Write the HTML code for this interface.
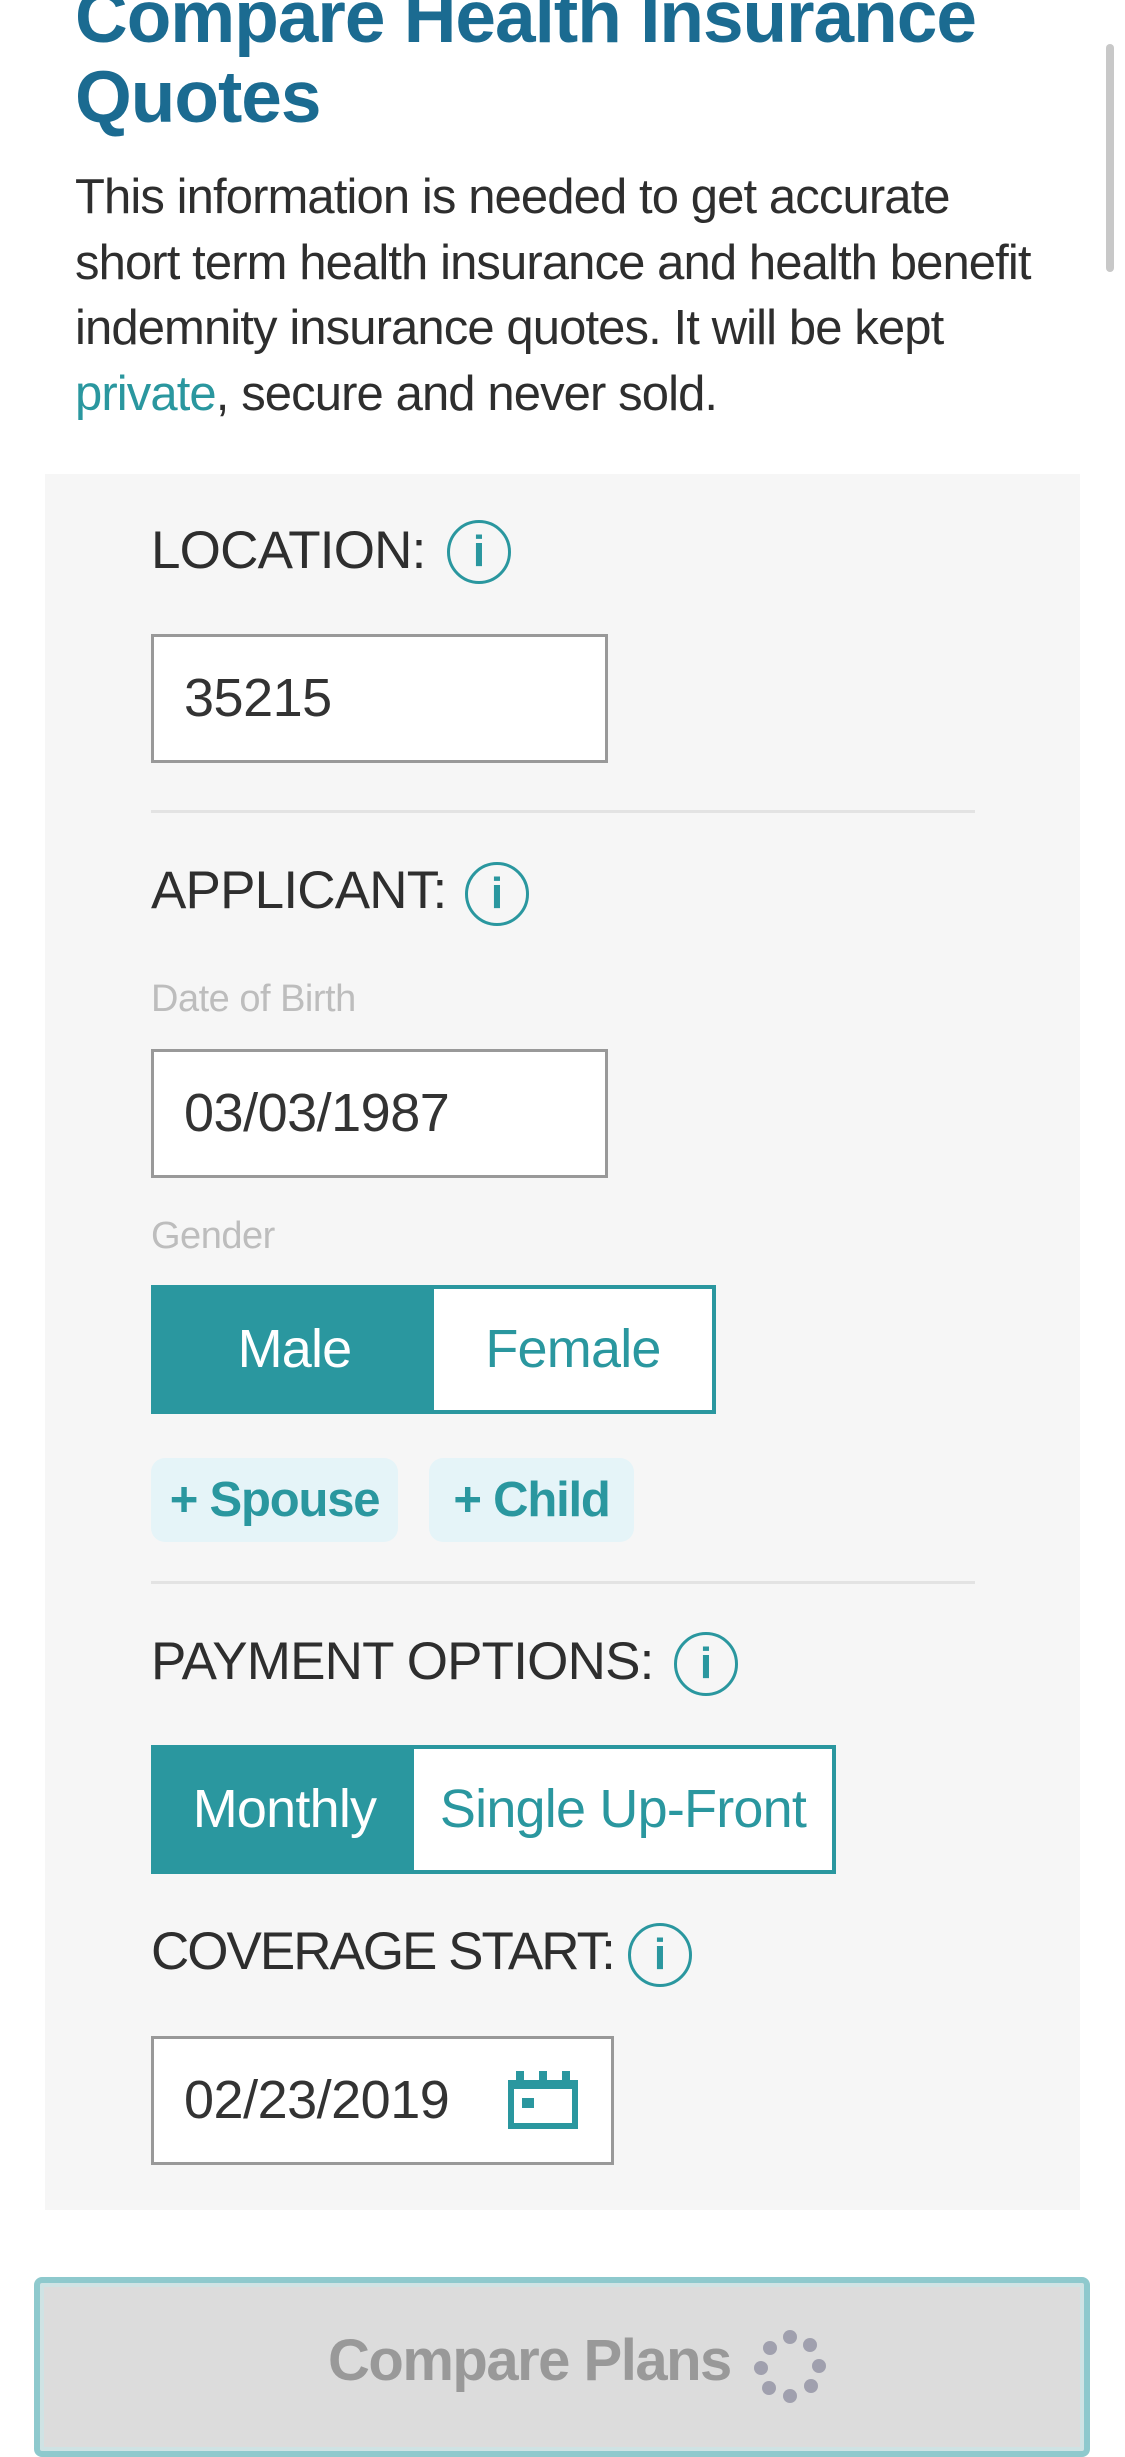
<!DOCTYPE html>
<html><head><meta charset="utf-8"><style>
*{margin:0;padding:0;box-sizing:border-box}
body{width:1125px;height:2436px;overflow:hidden;background:#fff;font-family:"Liberation Sans",sans-serif;position:relative;color:#333}
.a{position:absolute;white-space:nowrap}
h1{position:absolute;left:75px;top:-22px;font-size:73px;line-height:80px;color:#1b6b91;font-weight:bold;letter-spacing:-1px}
.p{position:absolute;left:75px;top:165px;font-size:49px;line-height:65.5px;letter-spacing:-0.9px;color:#2e2e2e}
.p span{color:#2a979f}
.panel{position:absolute;left:45px;top:474px;width:1035px;height:1736px;background:#f6f6f6}
.lbl{font-size:53px;letter-spacing:-0.8px;color:#2e2e2e}
.info{position:absolute;width:64px;height:64px;border:3px solid #2a979f;border-radius:50%;color:#2a979f;font-size:44px;text-align:center;line-height:58px;font-weight:bold}
.inp{position:absolute;left:151px;width:457px;height:129px;background:#fff;border:3px solid #999;font-size:54px;line-height:123px;padding-left:30px;color:#333;letter-spacing:-0.5px}
.hr{position:absolute;left:151px;width:824px;height:3px;background:#e3e3e3}
.small{font-size:38px;color:#bdbdbd;letter-spacing:-0.5px}
.tog{position:absolute;left:151px;height:129px;border:4px solid #2a979f;background:#fff;display:flex}
.tog div{height:100%;font-size:54px;line-height:121px;text-align:center;color:#2a979f;letter-spacing:-0.8px}
.tog .on{background:#2a979f;color:#fff}
.pill{position:absolute;top:1458px;height:84px;background:#e5f4f8;border-radius:14px;color:#2a979f;font-size:49px;font-weight:bold;line-height:84px;text-align:center;letter-spacing:-1.2px}
</style></head><body>
<h1>Compare Health Insurance<br>Quotes</h1>
<div class="p">This information is needed to get accurate<br>short term health insurance and health benefit<br>indemnity insurance quotes. It will be kept<br><span>private</span>, secure and never sold.</div>
<div class="a" style="left:1106px;top:44px;width:8px;height:228px;background:#c8c8c8;border-radius:4px"></div>
<div class="panel"></div>
<div class="a lbl" style="left:151px;top:520px">LOCATION:</div>
<div class="info" style="left:447px;top:520px">i</div>
<div class="inp" style="top:634px">35215</div>
<div class="hr" style="top:810px"></div>
<div class="a lbl" style="left:151px;top:860px">APPLICANT:</div>
<div class="info" style="left:465px;top:862px">i</div>
<div class="a small" style="left:151px;top:978px">Date of Birth</div>
<div class="inp" style="top:1049px">03/03/1987</div>
<div class="a small" style="left:151px;top:1215px">Gender</div>
<div class="tog" style="top:1285px;width:565px"><div class="on" style="width:279px">Male</div><div style="flex:1">Female</div></div>
<div class="pill" style="left:151px;width:247px">+ Spouse</div>
<div class="pill" style="left:429px;width:205px">+ Child</div>
<div class="hr" style="top:1581px"></div>
<div class="a lbl" style="left:151px;top:1631px">PAYMENT OPTIONS:</div>
<div class="info" style="left:674px;top:1632px">i</div>
<div class="tog" style="top:1745px;width:685px"><div class="on" style="width:259px">Monthly</div><div style="flex:1">Single Up-Front</div></div>
<div class="a lbl" style="left:151px;top:1921px;letter-spacing:-2px">COVERAGE START:</div>
<div class="info" style="left:628px;top:1923px">i</div>
<div class="inp" style="top:2036px;width:463px">02/23/2019</div>
<svg class="a" style="left:508px;top:2069px" width="70" height="60" viewBox="0 0 70 60"><rect x="3" y="14" width="64" height="43" fill="none" stroke="#2a979f" stroke-width="6"/><rect x="3" y="12" width="64" height="8" fill="#2a979f"/><rect x="8" y="2" width="8" height="12" fill="#2a979f"/><rect x="31" y="2" width="8" height="12" fill="#2a979f"/><rect x="54" y="2" width="8" height="12" fill="#2a979f"/><rect x="14" y="29" width="12" height="10" fill="#2a979f"/></svg>
<div class="a" style="left:34px;top:2277px;width:1056px;height:180px;border:6px solid #8ec9cd;border-radius:8px;background:#dcdcdc;box-shadow:inset 0 0 0 4px #cfe3e4"></div>
<div class="a" style="left:328px;top:2327px;font-size:58px;font-weight:bold;color:#999;letter-spacing:-1.5px">Compare Plans</div>
<svg class="a" style="left:750px;top:2328px" width="80" height="80" viewBox="0 0 80 80" fill="#a0a0ae"><circle cx="40" cy="9" r="7"/><circle cx="60" cy="17" r="7"/><circle cx="69" cy="38" r="7"/><circle cx="61" cy="58" r="7"/><circle cx="40" cy="68" r="7"/><circle cx="19" cy="60" r="7"/><circle cx="11" cy="40" r="7"/><circle cx="20" cy="20" r="7"/></svg>
</body></html>
